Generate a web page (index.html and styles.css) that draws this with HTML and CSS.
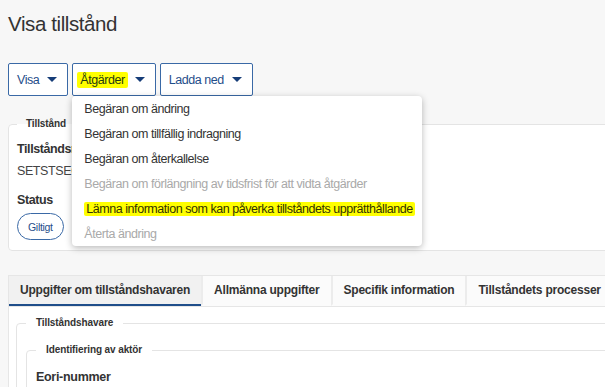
FILE: index.html
```html
<!DOCTYPE html>
<html lang="sv">
<head>
<meta charset="utf-8">
<title>Visa tillstånd</title>
<link rel="stylesheet" href="styles.css">
</head>
<body>
<div class="page">
  <h1 class="title">Visa tillstånd</h1>

  <div class="toolbar">
    <div class="dd">
      <button class="btn">Visa<span class="caret"></span></button>
    </div>
    <div class="dd">
      <button class="btn btn-hl"><span class="hl hl-btn">Åtgärder</span><span class="caret"></span></button>
      <ul class="menu">
        <li>Begäran om ändring</li>
        <li>Begäran om tillfällig indragning</li>
        <li>Begäran om återkallelse</li>
        <li class="disabled">Begäran om förlängning av tidsfrist för att vidta åtgärder</li>
        <li><span class="hl">Lämna information som kan påverka tillståndets upprätthållande</span></li>
        <li class="disabled">Återta ändring</li>
      </ul>
    </div>
    <div class="dd">
      <button class="btn">Ladda ned<span class="caret"></span></button>
    </div>
  </div>

  <fieldset class="panel">
    <legend class="legend">Tillstånd</legend>
    <div class="label first">Tillståndsnummer</div>
    <div class="value">SETSTSEC00000001</div>
    <div class="label status">Status</div>
    <span class="pill">Giltigt</span>
  </fieldset>

  <div class="tabs">
    <div class="tablist">
      <div class="tab active">Uppgifter om tillståndshavaren</div>
      <div class="tab">Allmänna uppgifter</div>
      <div class="tab">Specifik information</div>
      <div class="tab">Tillståndets processer</div>
    </div>
    <div class="tab-body">
      <fieldset class="group">
        <legend class="legend">Tillståndshavare</legend>
        <fieldset class="group nested">
          <legend class="legend">Identifiering av aktör</legend>
          <div class="label eori">Eori-nummer</div>
        </fieldset>
      </fieldset>
    </div>
  </div>
</div>
</body>
</html>
```

FILE: styles.css
```css
html, body {
  margin: 0;
  background: #f7f7f7;
  color: #333;
  font-family: "Liberation Sans", Arial, sans-serif;
  overflow: hidden;
}

.page {
  width: 640px;
  padding-left: 8px;
}

.title {
  margin: 0;
  padding-top: 11px;
  font-size: 20.5px;
  line-height: 26px;
  font-weight: normal;
  letter-spacing: -0.4px;
  color: #333;
}

.toolbar {
  display: flex;
  gap: 4px;
  margin-top: 26px;
}

.dd {
  position: relative;
}

.btn {
  display: flex;
  align-items: center;
  gap: 8px;
  height: 33px;
  box-sizing: border-box;
  margin: 0;
  padding: 0 10px 0 8px;
  background: #fff;
  border: 1px solid #3a69a6;
  border-radius: 2px;
  font-family: inherit;
  font-size: 12.5px;
  letter-spacing: -0.45px;
  color: #1f4e8a;
}

.btn-hl {
  padding-left: 4px;
  gap: 7px;
}

.caret {
  width: 0;
  height: 0;
  border-left: 5px solid transparent;
  border-right: 5px solid transparent;
  border-top: 5px solid #163d78;
}

.hl {
  background: #ffff00;
  color: #333300;
  padding: 0 2px;
  border-radius: 2px;
}

.hl-btn {
  padding: 1px 3px;
  color: #1f3a10;
}

.menu {
  position: absolute;
  top: 100%;
  left: 0;
  z-index: 10;
  width: 350px;
  margin: 0;
  padding: 0;
  list-style: none;
  background: #fff;
  border-radius: 4px;
  box-shadow: 0 2px 7px rgba(0, 0, 0, 0.28);
}

.menu li {
  display: flex;
  align-items: center;
  height: 25px;
  padding: 0 10px 0 12px;
  font-size: 12.5px;
  letter-spacing: -0.45px;
  color: #333;
  white-space: nowrap;
}

.menu li.disabled {
  color: #a9a9a9;
}

.panel {
  margin: 22px 0 0;
  padding: 0 8px 10px;
  min-width: 0;
  background: #fff;
  border: 1px solid #e4e4e4;
  border-radius: 4px;
}

.legend {
  padding: 0 9px;
  font-size: 10px;
  line-height: 12px;
  font-weight: bold;
  letter-spacing: -0.1px;
  color: #333;
}

.label {
  font-size: 12.5px;
  line-height: 16px;
  font-weight: bold;
  letter-spacing: -0.4px;
  color: #333;
}

.label.first {
  margin-top: 11px;
}

.value {
  margin-top: 6px;
  font-size: 12.5px;
  line-height: 16px;
  letter-spacing: -0.4px;
  color: #444;
}

.label.status {
  margin-top: 13px;
}

.pill {
  display: inline-flex;
  align-items: center;
  margin-top: 5px;
  height: 27px;
  box-sizing: border-box;
  padding: 0 10px;
  border: 1px solid #3a69a6;
  border-radius: 14px;
  font-size: 10.5px;
  letter-spacing: -0.3px;
  color: #1f4e8a;
}

.tabs {
  margin-top: 24px;
  background: #fff;
  border: 1px solid #e6e6e6;
  border-right: none;
  min-height: 200px;
}

.tablist {
  display: flex;
  background: #fbfbfb;
  border-bottom: 1px solid #e6e6e6;
}

.tab {
  display: flex;
  align-items: center;
  height: 30px;
  box-sizing: border-box;
  padding: 0 11px;
  border-bottom: 2px solid transparent;
  border-left: 2px solid #ececec;
  font-size: 12px;
  font-weight: bold;
  letter-spacing: -0.22px;
  color: #333;
  white-space: nowrap;
}

.tab.active {
  background: #f1f1f1;
  border-left: none;
  border-bottom-color: #1f4e8a;
}

.tab-body {
  padding: 10px 0 0 7px;
}

.group {
  margin: 0;
  padding: 0 9px 20px;
  min-width: 0;
  border: 1px solid #e4e4e4;
  border-radius: 4px;
}

.group > .legend {
  padding: 0 10px;
}

.group.nested {
  margin-top: 15px;
}

.label.eori {
  margin-top: 13px;
  font-size: 12.5px;
  letter-spacing: -0.3px;
}
```
